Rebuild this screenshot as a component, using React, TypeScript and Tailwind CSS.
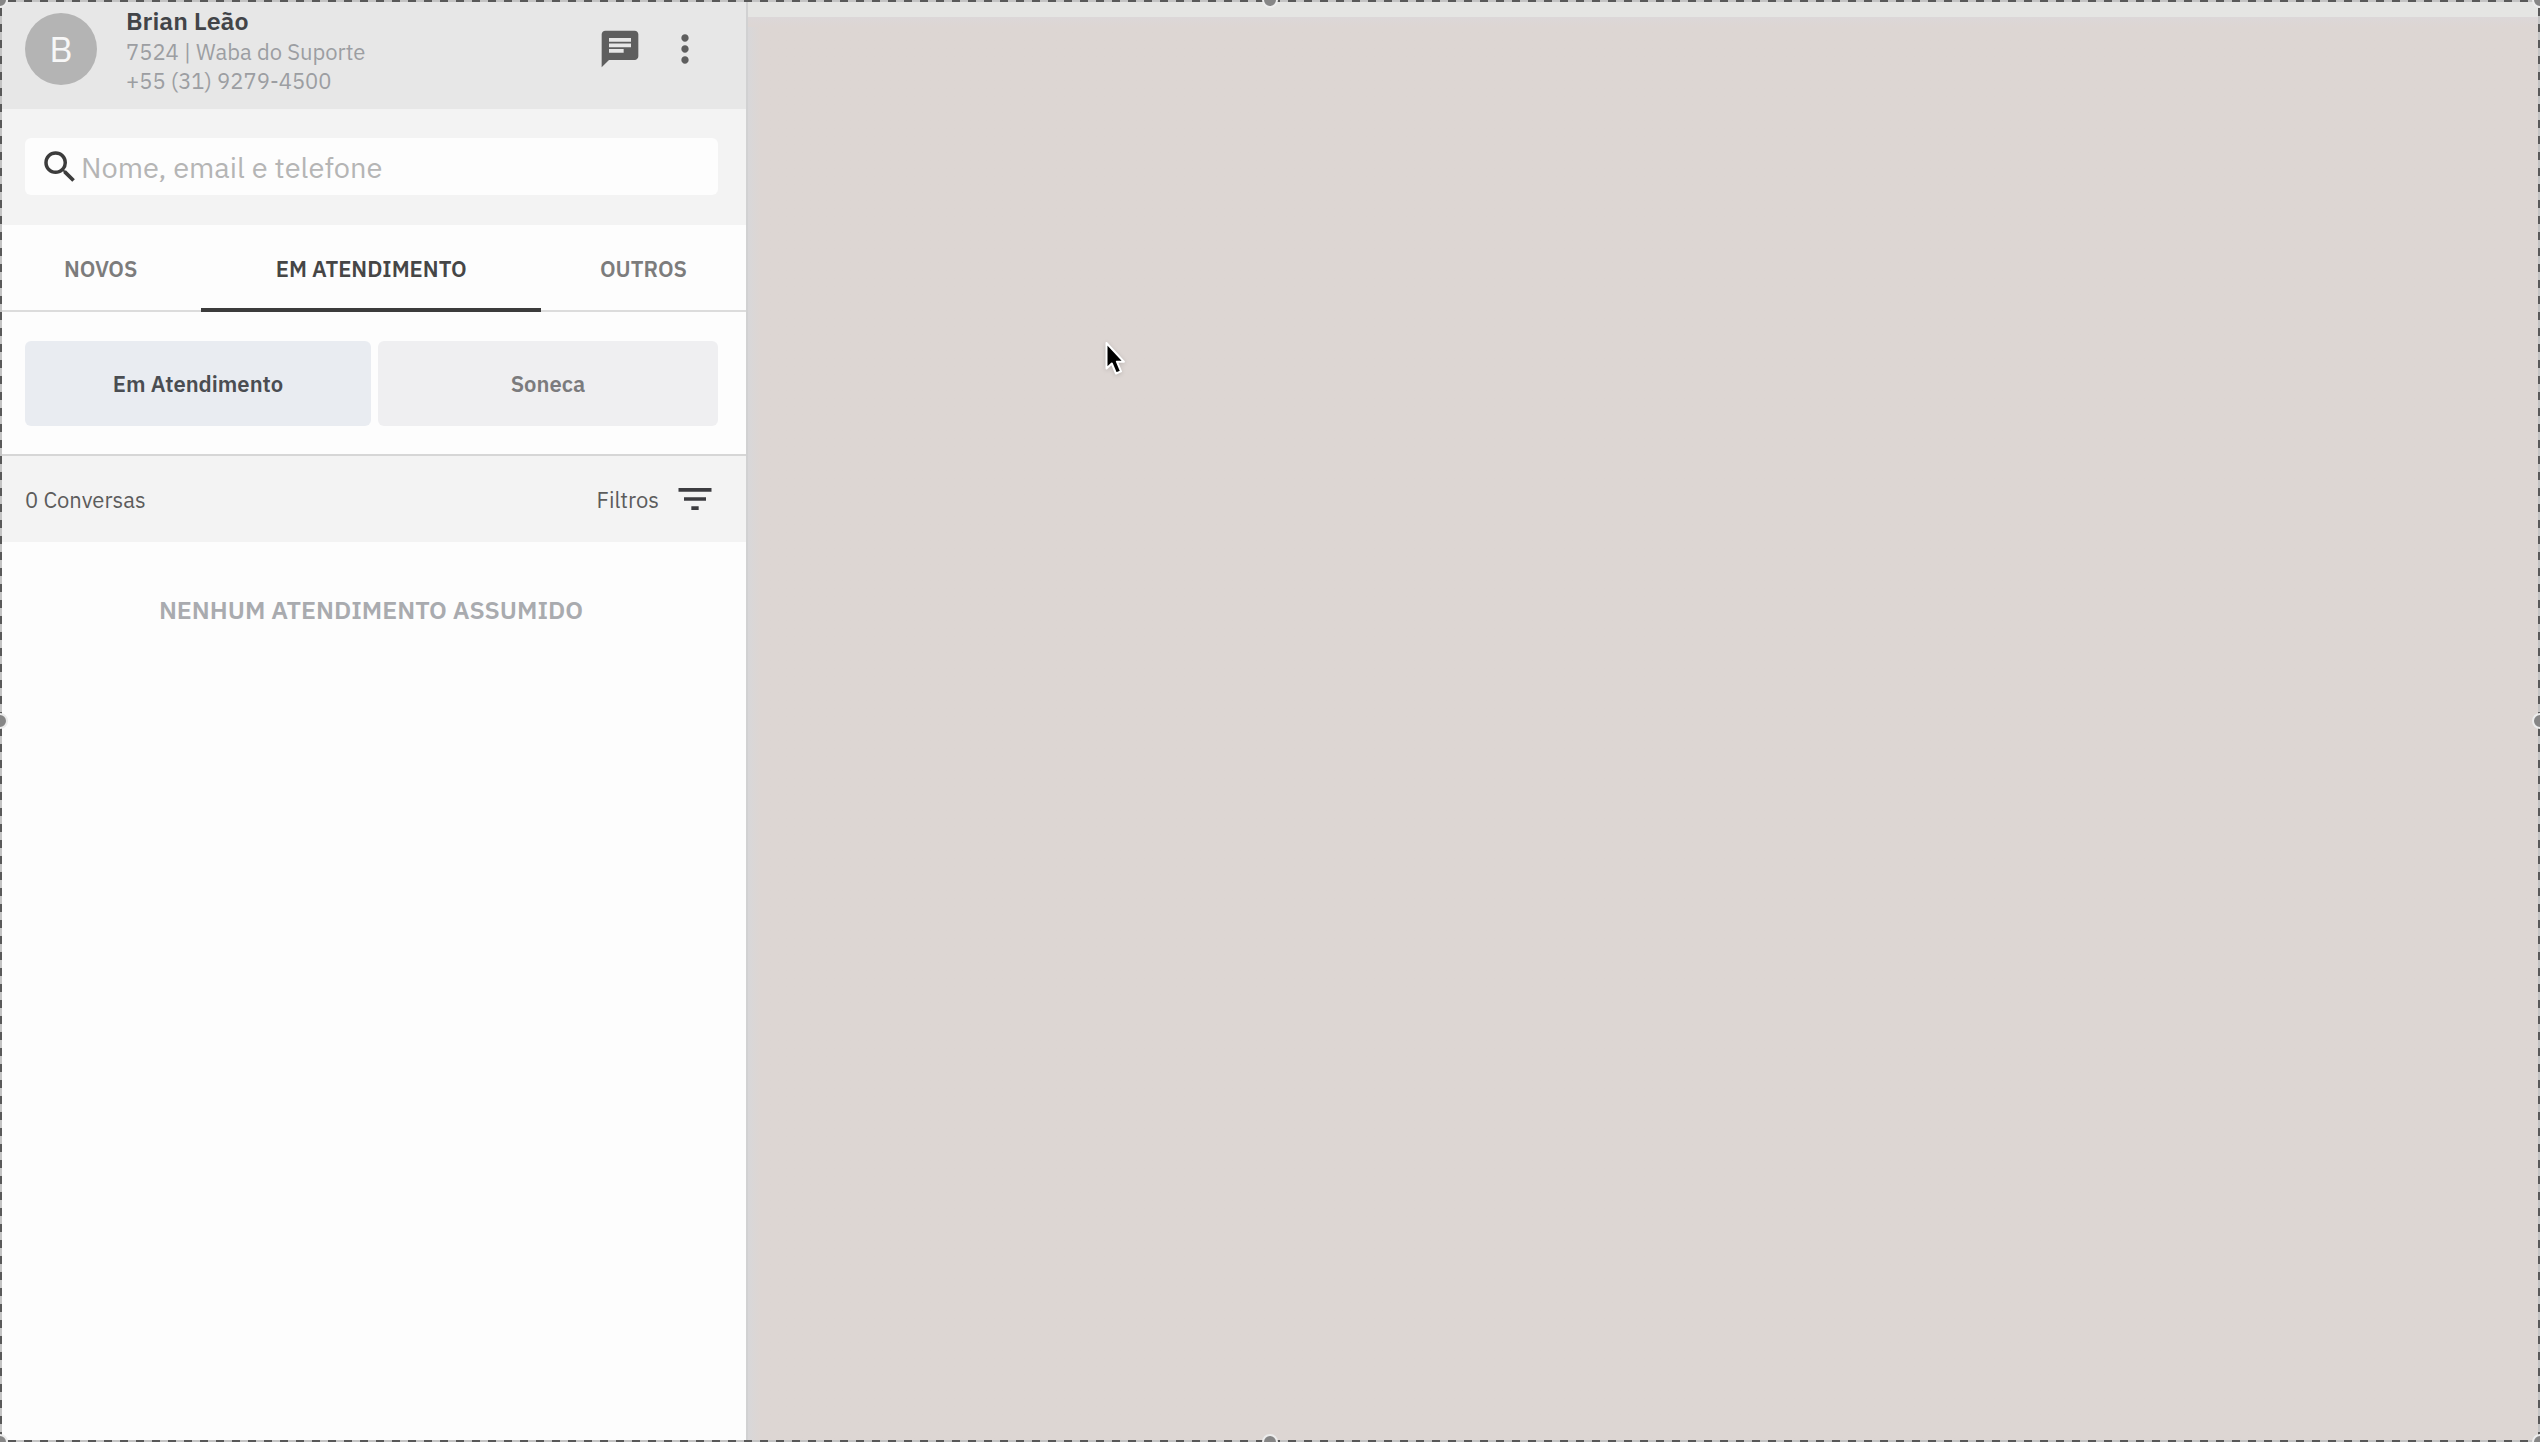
import { MdChat, MdFilterList, MdMoreVert, MdSearch } from "react-icons/md";

type Tab = { label: string; className: string; active: boolean }

const tabs: Tab[] = [
    { label: "NOVOS", className: "w-[27%]", active: false },
    { label: "EM ATENDIMENTO", className: "flex-1", active: true },
    { label: "OUTROS", className: "w-[27.5%]", active: false },
]

const handles: string[] = [
    "left-0 top-0",
    "left-1/2 top-0",
    "left-full top-0",
    "left-0 top-1/2",
    "left-full top-1/2",
    "left-0 top-full",
    "left-1/2 top-full",
    "left-full top-full",
]

function Header() {
    return (
        <header className="flex h-[109px] items-start bg-[#e7e7e7] pl-[25px] pr-[39px]">
            <div className="mt-[13px] flex size-[72px] shrink-0 items-center justify-center rounded-full bg-[#b4b4b4] text-[36px] text-[#f7f7f7]">B</div>
            <div className="ml-[29px] flex-1 pt-[4px] text-[22px] leading-[29px] text-[#9c9ea2]">
                <h1 className="text-[25px] leading-[33px] font-semibold text-[#424448]">Brian Leão</h1>
                <p>7524 | Waba do Suporte</p>
                <p>+55 (31) 9279-4500</p>
            </div>
            <div className="flex gap-[21px] pt-[27px] text-[44px] text-[#5e5e5e]">
                <button type="button" aria-label="Nova conversa"><MdChat /></button>
                <button type="button" aria-label="Mais opções"><MdMoreVert /></button>
            </div>
        </header>
    )
}

function Search() {
    return (
        <div className="bg-[#f3f3f3] pt-[29px] pr-[28px] pb-[30px] pl-[25px]">
            <label className="flex h-[57px] items-center rounded-md bg-[#fdfdfd] pl-[14px]">
                <MdSearch className="size-[42px] shrink-0 text-[#3c3c3c]" />
                <input type="search" aria-label="Buscar" placeholder="Nome, email e telefone" className="h-full w-full bg-transparent text-[29px] text-[#444] outline-none placeholder:text-[#b5b5b5]" />
            </label>
        </div>
    )
}

function Tabs() {
    return (
        <nav className="flex h-[87px] border-b-2 border-[#dcdcdc] text-[22px] font-semibold">
            {tabs.map(tab => (
                <button
                    key={tab.label}
                    type="button"
                    className={tab.className + " -mb-[2px] border-b-4 pt-[4px] " + (tab.active ? "border-[#3c3c3c] text-[#464646]" : "border-transparent text-[#7c7c7c]")}
                >
                    {tab.label}
                </button>
            ))}
        </nav>
    )
}

function Pointer() {
    return (
        <svg viewBox="0 0 20 34" className="absolute top-[341px] left-[1105px] w-[20px] drop-shadow-sm" aria-hidden="true">
            <path d="M1.5 2v25.5l5.3-5 4.2 10 5-2.2-4.1-9.6h7z" fill="#000" stroke="#fff" strokeWidth="2" strokeLinejoin="round" />
        </svg>
    )
}

// Dashed outline with a handle on every corner and side
function SelectionFrame() {
    return (
        <div className="pointer-events-none absolute inset-0 overflow-hidden">
            <div className="absolute inset-x-0 top-0 h-[2px] bg-[repeating-linear-gradient(90deg,#c4c4c4_0_8px,#595959_8px_16px)]" />
            <div className="absolute inset-x-0 bottom-0 h-[2px] bg-[repeating-linear-gradient(90deg,#c4c4c4_0_8px,#595959_8px_16px)]" />
            <div className="absolute inset-y-0 left-0 w-[2px] bg-[repeating-linear-gradient(180deg,#c4c4c4_0_8px,#595959_8px_16px)]" />
            <div className="absolute inset-y-0 right-0 w-[2px] bg-[repeating-linear-gradient(180deg,#c4c4c4_0_8px,#595959_8px_16px)]" />
            {handles.map(handle => (
                <span key={handle} className={"absolute size-[16px] -translate-x-1/2 -translate-y-1/2 rounded-full border-2 border-[#ececec] bg-[#868686] " + handle} />
            ))}
        </div>
    )
}

export default function App() {
    return (
        <div className="relative flex min-h-screen bg-[#ddd6d3] font-['IBM_Plex_Sans',Roboto,sans-serif]">
            <aside className="w-[29.37%] min-w-[560px] shrink-0 bg-[#fdfdfd]">
                <Header />
                <Search />
                <Tabs />
                <div className="flex gap-[7px] pt-[29px] pr-[28px] pb-[28px] pl-[25px] text-[22px] font-semibold">
                    <button type="button" className="h-[85px] w-[346px] grow rounded-md bg-[#e9ecf1] text-[#4a4d52]">Em Atendimento</button>
                    <button type="button" className="h-[85px] w-[340px] grow rounded-md bg-[#efeff1] text-[#7b7b7d]">Soneca</button>
                </div>
                <div className="flex h-[88px] items-center justify-between border-t-2 border-[#d6d6d6] bg-[#f3f3f3] pr-[29px] pl-[25px] text-[22px] text-[#5c5c5c]">
                    <span>0 Conversas</span>
                    <button type="button" className="flex items-center gap-[14px]">
                        Filtros
                        <MdFilterList className="size-[44px] text-[#3c3c40]" />
                    </button>
                </div>
                <p className="pt-[52px] pr-[4px] text-center text-[25px] leading-[32px] font-semibold text-[#a9abaf]">NENHUM ATENDIMENTO ASSUMIDO</p>
            </aside>
            <main className="flex-1 border-l-2 border-[#d1d1d2] bg-linear-to-r from-[#d8d7d9] to-[#ddd6d3] to-[12px]">
                <div className="h-[17px] bg-[#e5e5e3]" />
                <div className="h-[10px] bg-linear-to-b from-[#dcd7d8] to-[#ddd6d3]" />
            </main>
            <Pointer />
            <SelectionFrame />
        </div>
    )
}
